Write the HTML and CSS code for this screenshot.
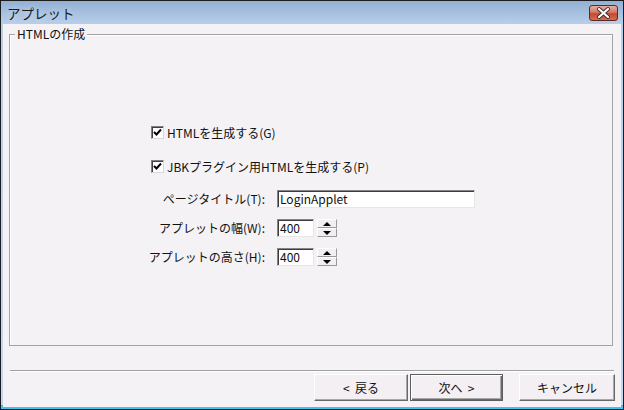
FILE: index.html
```html
<!DOCTYPE html>
<html lang="ja">
<head>
<meta charset="utf-8">
<title>アプレット</title>
<link rel="stylesheet" href="styles.css">
</head>
<body>
<div class="window">
  <div class="titlebar">
    <span class="title">アプレット</span>
    <div class="close">
      <svg width="29" height="16" viewBox="0 0 29 16">
        <defs>
          <linearGradient id="cg" x1="0" y1="0" x2="0" y2="1">
            <stop offset="0" stop-color="#e9b1a4"/>
            <stop offset="0.45" stop-color="#d37a66"/>
            <stop offset="0.55" stop-color="#c24a32"/>
            <stop offset="1" stop-color="#d9704f"/>
          </linearGradient>
        </defs>
        <rect x="0.5" y="0.5" width="28" height="15" rx="2.5" fill="url(#cg)" stroke="#5c2a22"/>
        <path d="M10 4 L19 12 M19 4 L10 12" stroke="#3a2a2a" stroke-width="4" stroke-linecap="round"/>
        <path d="M10 4 L19 12 M19 4 L10 12" stroke="#ffffff" stroke-width="2.2" stroke-linecap="round"/>
      </svg>
    </div>
  </div>
  <div class="client">
    <div class="group">
      <span class="legend">HTMLの作成</span>
      <div class="form">
        <div class="check"><span class="box"><svg width="9" height="9" viewBox="0 0 9 9"><path d="M1 4 L3.5 6.5 L8 1.5" fill="none" stroke="#000" stroke-width="2"/></svg></span><span>HTMLを生成する(G)</span></div>
        <div class="check second"><span class="box"><svg width="9" height="9" viewBox="0 0 9 9"><path d="M1 4 L3.5 6.5 L8 1.5" fill="none" stroke="#000" stroke-width="2"/></svg></span><span>JBKプラグイン用HTMLを生成する(P)</span></div>
        <div class="fields">
          <span class="lbl">ページタイトル(T):</span>
          <div class="input wide">LoginApplet</div>
          <span class="lbl">アプレットの幅(W):</span>
          <div class="spinrow">
            <div class="input num">400</div>
            <div class="spin"><span class="sb"><span class="up"></span></span><span class="sb"><span class="down"></span></span></div>
          </div>
          <span class="lbl">アプレットの高さ(H):</span>
          <div class="spinrow">
            <div class="input num">400</div>
            <div class="spin"><span class="sb"><span class="up"></span></span><span class="sb"><span class="down"></span></span></div>
          </div>
        </div>
      </div>
    </div>
    <div class="sep"></div>
    <div class="buttons">
      <div class="btn b1">&lt;&nbsp;&nbsp;戻る</div>
      <div class="btn b2 default">次へ&nbsp;&nbsp;&gt;</div>
      <div class="btn b3">キャンセル</div>
    </div>
  </div>
</div>
</body>
</html>
```

FILE: styles.css
```css
* { box-sizing: border-box; }
html, body { margin: 0; padding: 0; background: #fff; }
body {
  font-family: "Noto Sans CJK JP", "Noto Sans", sans-serif;
  font-size: 12px;
  color: #111;
}
.window {
  width: 624px;
  height: 410px;
  border: 1px solid #1c1c1c;
  background: linear-gradient(to bottom, #93b0d4 0px, #b8cfea 23px, #c4d8ef 404px, #3ec2ee 404px);
  display: flex;
  flex-direction: column;
}
.titlebar {
  height: 23px;
  flex: none;
  display: flex;
  justify-content: space-between;
  align-items: flex-start;
  padding: 4px 5px 0 6px;
}
.title {
  font-size: 13.5px;
  line-height: 16px;
  color: #1a1a1a;
  text-shadow: 0 0 6px rgba(255,255,255,0.6);
}
.close { width: 29px; height: 16px; line-height: 0; }
.client {
  flex: 1;
  margin: 0 2px 2px 2px;
  background: #f5f2f5;
  display: flex;
  flex-direction: column;
}
.group {
  position: relative;
  margin: 10px 8px 0 6px;
  height: 312px;
  border: 1px solid #a3a3a3;
  box-shadow: inset 1px 1px 0 #ffffff;
}
.legend {
  position: absolute;
  left: 5px;
  top: -8px;
  padding: 0 2px;
  background: #f5f2f5;
  line-height: 14px;
  font-size: 12px;
}
.form {
  padding: 90px 0 0 137px;
  display: flex;
  flex-direction: column;
}
.check {
  display: flex;
  align-items: center;
  height: 15px;
  margin-left: 4px;
  gap: 3px;
  line-height: 15px;
}
.check.second { margin-top: 19px; }
.box {
  width: 13px;
  height: 13px;
  border: 1px solid #808080;
  border-right-color: #d8d8d8;
  border-bottom-color: #d8d8d8;
  box-shadow: inset 1px 1px 0 #404040;
  background: #fff;
  display: flex;
  align-items: center;
  justify-content: center;
}
.fields {
  margin-top: 16px;
  display: grid;
  grid-template-columns: 118px auto;
  column-gap: 12px;
  row-gap: 11px;
  align-items: center;
}
.lbl {
  text-align: right;
  white-space: nowrap;
  line-height: 18px;
}
.input {
  height: 18px;
  background: #fff;
  border: 1px solid;
  border-color: #858585 #e6e6e6 #e6e6e6 #858585;
  box-shadow: inset 1px 1px 0 #3c3c3c;
  padding: 0 2px;
  line-height: 16px;
  font-size: 12px;
}
.wide { width: 198px; }
.num { width: 37px; }
.spinrow { display: flex; gap: 3px; }
.spin {
  width: 20px;
  height: 18px;
  display: flex;
  flex-direction: column;
}
.sb {
  height: 9px;
  background: #f2eef2;
  border: 1px solid;
  border-color: #ffffff #9a9a9a #9a9a9a #ffffff;
  display: flex;
  align-items: center;
  justify-content: center;
}
.up {
  width: 0; height: 0;
  border-left: 4px solid transparent;
  border-right: 4px solid transparent;
  border-bottom: 4px solid #000;
}
.down {
  width: 0; height: 0;
  border-left: 4px solid transparent;
  border-right: 4px solid transparent;
  border-top: 4px solid #000;
}
.sep {
  margin: 24px 7px 0 7px;
  height: 2px;
  border-top: 1px solid #a0a0a0;
  border-bottom: 1px solid #ffffff;
}
.buttons {
  margin-top: 2px;
  display: flex;
  justify-content: flex-end;
  padding-right: 6px;
}
.btn {
  height: 27px;
  background: #f3eff3;
  border: 1px solid;
  border-color: #ffffff #6a6a6a #6a6a6a #ffffff;
  box-shadow: inset -1px -1px 0 #a8a8a8;
  display: flex;
  align-items: center;
  justify-content: center;
  font-size: 12px;
}
.b1 { width: 94px; }
.b2 { width: 93px; margin-left: 2px; }
.b3 { width: 96px; margin-left: 16px; }
.btn.default {
  border-color: #5e5e5e;
  box-shadow: inset 1px 1px 0 #ffffff, inset -1px -1px 0 #6a6a6a, inset -2px -2px 0 #a8a8a8;
}
```
